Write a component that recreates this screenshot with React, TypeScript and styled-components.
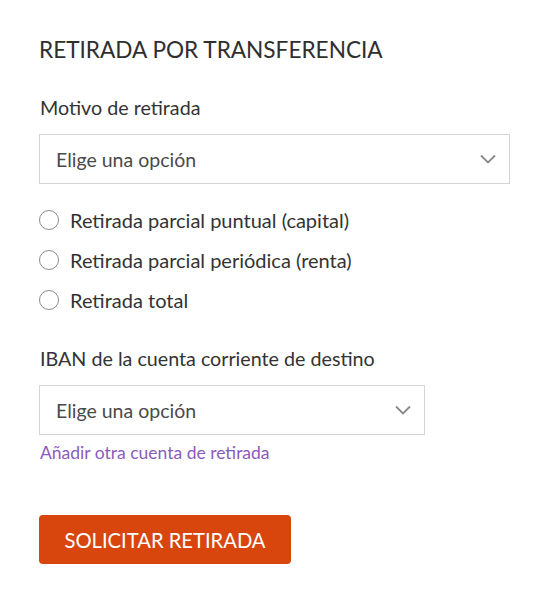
import styled, { createGlobalStyle } from "styled-components";

const GlobalStyle = createGlobalStyle`
    body {
        margin: 0;
        background: #fff;
        font-family: Lato, "Open Sans", sans-serif;
        color: #333;
    }
`;

const Page = styled.div`
    width: 471px;
    padding: 35px 36px 30px 39px;
    display: flex;
    flex-direction: column;
`;

const Title = styled.h2`
    margin: 0 0 32px 0;
    font-size: 22.6px;
    font-weight: 400;
    line-height: 29px;
    color: #2f2f2f;
`;

const Label = styled.label`
    display: block;
    font-size: 19.7px;
    line-height: 24px;
    color: #333;
    margin-bottom: 14px;
    padding-left: 1px;
`;

const SelectBox = styled.div<{ $width: number }>`
    box-sizing: border-box;
    width: ${p => p.$width}px;
    height: 50px;
    border: 1px solid #d4d4d4;
    display: flex;
    align-items: center;
    justify-content: space-between;
    padding: 0 13px 0 16px;
    font-size: 19.5px;
    color: #4a4a4a;
    background: #fff;
`;

const RadioList = styled.div`
    display: flex;
    flex-direction: column;
    gap: 16px;
    margin-top: 24px;
`;

const RadioRow = styled.label`
    display: flex;
    align-items: center;
    gap: 11px;
    font-size: 20px;
    line-height: 24px;
    color: #333;
`;

const RadioCircle = styled.span`
    box-sizing: border-box;
    width: 20px;
    height: 20px;
    border: 1.5px solid #8a8a8a;
    border-radius: 50%;
    flex-shrink: 0;
`;

const Section = styled.div`
    margin-top: 35px;
`;

const AddLink = styled.a`
    display: block;
    margin-top: 7px;
    font-size: 17.5px;
    line-height: 21px;
    color: #8a5cbd;
    text-decoration: none;
    padding-left: 1px;
`;

const SubmitButton = styled.button`
    margin-top: 52px;
    width: 252px;
    height: 49px;
    border: none;
    border-radius: 4px;
    background-color: #d8460e;
    color: #fff;
    font-family: inherit;
    font-size: 20.2px;
    text-transform: uppercase;
    align-self: flex-start;
`;

function Chevron() {
    return (
        <svg width="16" height="10" viewBox="0 0 16 10" fill="none">
            <path d="M1 1.5 L8 8.5 L15 1.5" stroke="#8a8a8a" strokeWidth="1.8" />
        </svg>
    );
}

const options = [
    "Retirada parcial puntual (capital)",
    "Retirada parcial periódica (renta)",
    "Retirada total",
];

export default function App() {
    return (
        <>
            <GlobalStyle />
            <Page>
                <Title>RETIRADA POR TRANSFERENCIA</Title>
                <Label>Motivo de retirada</Label>
                <SelectBox $width={471}>
                    <span>Elige una opción</span>
                    <Chevron />
                </SelectBox>
                <RadioList>
                    {options.map(o => (
                        <RadioRow key={o}>
                            <RadioCircle />
                            {o}
                        </RadioRow>
                    ))}
                </RadioList>
                <Section>
                    <Label>IBAN de la cuenta corriente de destino</Label>
                    <SelectBox $width={386}>
                        <span>Elige una opción</span>
                        <Chevron />
                    </SelectBox>
                    <AddLink href="#">Añadir otra cuenta de retirada</AddLink>
                </Section>
                <SubmitButton>Solicitar retirada</SubmitButton>
            </Page>
        </>
    );
}
